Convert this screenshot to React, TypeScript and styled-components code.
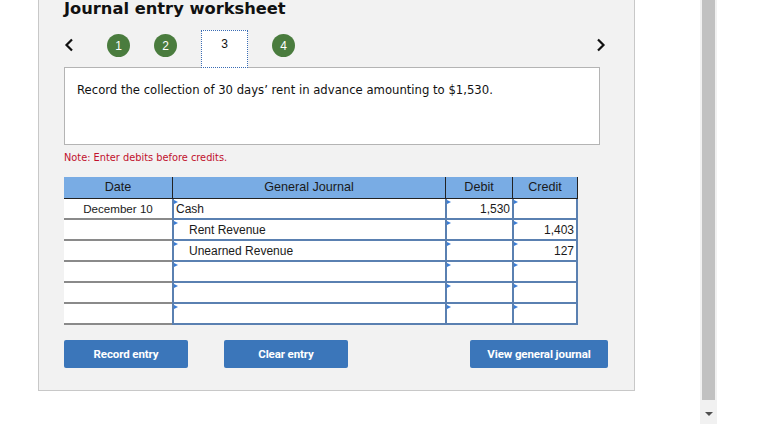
import styled, { createGlobalStyle } from 'styled-components';

const GlobalStyle = createGlobalStyle`
  html, body {
    margin: 0;
    padding: 0;
    background: #ffffff;
  }
  * {
    box-sizing: border-box;
  }
`;

const rows = [
  { date: 'December 10', account: 'Cash', indent: false, debit: '1,530', credit: '' },
  { date: '', account: 'Rent Revenue', indent: true, debit: '', credit: '1,403' },
  { date: '', account: 'Unearned Revenue', indent: true, debit: '', credit: '127' },
  { date: '', account: '', indent: false, debit: '', credit: '' },
  { date: '', account: '', indent: false, debit: '', credit: '' },
  { date: '', account: '', indent: false, debit: '', credit: '' },
];

function Chevron({ dir }: { dir: 'left' | 'right' }) {
  return (
    <svg width="10" height="14" viewBox="0 0 10 14">
      <path
        d={dir === 'left' ? 'M8 1.5 L2.5 7 L8 12.5' : 'M2 1.5 L7.5 7 L2 12.5'}
        fill="none"
        stroke="#111"
        strokeWidth="2.2"
      />
    </svg>
  );
}

export default function App() {
  return (
    <Shell>
      <GlobalStyle />
      <Main>
        <Panel>
          <Title>Journal entry worksheet</Title>
          <Nav>
            <Arrow>
              <Chevron dir="left" />
            </Arrow>
            <Step $first>1</Step>
            <Step>2</Step>
            <Tab>3</Tab>
            <Step>4</Step>
            <Arrow $right>
              <Chevron dir="right" />
            </Arrow>
          </Nav>
          <Question>
            Record the collection of 30 days’ rent in advance amounting to $1,530.
          </Question>
          <Note>Note: Enter debits before credits.</Note>

          <Journal>
            <HeadCell>Date</HeadCell>
            <HeadCell>General Journal</HeadCell>
            <HeadCell>Debit</HeadCell>
            <HeadCell $last>Credit</HeadCell>
            {rows.map((r, i) => (
              <Row key={i}>
                <DateCell>{r.date}</DateCell>
                <Entry $indent={r.indent}>{r.account}</Entry>
                <Entry $amount>{r.debit}</Entry>
                <Entry $amount $last>
                  {r.credit}
                </Entry>
              </Row>
            ))}
          </Journal>

          <Actions>
            <Button $width={124}>Record entry</Button>
            <Button $width={124} style={{ marginLeft: 36 }}>
              Clear entry
            </Button>
            <Button $width={138} $push>
              View general journal
            </Button>
          </Actions>
        </Panel>
      </Main>
      <ScrollTrack>
        <Thumb />
        <DownArrow />
      </ScrollTrack>
    </Shell>
  );
}

const Shell = styled.div`
  display: flex;
  align-items: flex-start;
  width: 770px;
  height: 428px;
  overflow: hidden;
  background: #fff;
`;

const Main = styled.main`
  flex: 0 0 700px;
  padding-left: 38px;
`;

const Panel = styled.section`
  width: 597px;
  background: #f2f2f2;
  border: 1px solid #c8c8c8;
  border-top: none;
  padding: 0 0 22px 25px;
`;

const Title = styled.h1`
  margin: 0;
  height: 30px;
  font-family: 'DejaVu Sans', Verdana, sans-serif;
  font-weight: bold;
  font-size: 16.3px;
  line-height: 18px;
  color: #111;
`;

const Nav = styled.div`
  display: flex;
  align-items: center;
  width: 542px;
  height: 37px;
`;

const Arrow = styled.div<{ $right?: boolean }>`
  display: flex;
  margin-bottom: 8px;
  margin-left: ${(p) => (p.$right ? 'auto' : '0')};
`;

const Step = styled.div<{ $first?: boolean }>`
  width: 23px;
  height: 23px;
  border-radius: 50%;
  background: #4a7c3e;
  color: #fff;
  display: flex;
  align-items: center;
  justify-content: center;
  font-family: 'Liberation Sans', Arial, sans-serif;
  font-size: 12px;
  margin-bottom: 6px;
  margin-left: ${(p) => (p.$first ? '33px' : '24px')};
`;

const Tab = styled.div`
  position: relative;
  z-index: 1;
  align-self: flex-start;
  width: 47px;
  height: 38px;
  margin-left: 24px;
  background: #fff;
  border: 1px dotted #3a6cb4;
  display: flex;
  align-items: center;
  justify-content: center;
  padding-bottom: 10px;
  font-family: 'Liberation Sans', Arial, sans-serif;
  font-size: 12px;
  color: #111;
`;

const Question = styled.div`
  width: 536px;
  height: 78px;
  background: #fff;
  border: 1px solid #b4b4b4;
  padding: 14px 0 0 12px;
  font-family: 'DejaVu Sans', Verdana, sans-serif;
  font-size: 11.65px;
  line-height: 16px;
  color: #111;
`;

const Note = styled.div`
  margin-top: 7px;
  font-family: 'DejaVu Sans', Verdana, sans-serif;
  font-size: 9.8px;
  line-height: 12px;
  color: #c1102c;
`;

const Journal = styled.div`
  margin-top: 13px;
  width: 514px;
  display: grid;
  grid-template-columns: 108px 273px 67px 66px;
  font-family: 'Liberation Sans', Arial, sans-serif;
  font-size: 12px;
  color: #1a1a1a;
`;

const HeadCell = styled.div<{ $last?: boolean }>`
  height: 22px;
  background: #79ace4;
  border-bottom: 1px solid #222;
  border-right: ${(p) => (p.$last ? '1px solid #222' : 'none')};
  border-left: 1px solid #222;
  display: flex;
  align-items: center;
  justify-content: center;
  padding-bottom: 1px;
  font-size: 12.6px;
  &:first-child {
    border-left: none;
  }
`;

const Row = styled.div`
  display: contents;
`;

const DateCell = styled.div`
  height: 21px;
  background: #fff;
  border-bottom: 2px solid #8a8a8a;
  display: flex;
  align-items: center;
  justify-content: center;
  font-size: 11.6px;
`;

const Entry = styled.div<{ $indent?: boolean; $amount?: boolean; $last?: boolean }>`
  position: relative;
  height: 21px;
  background: #fff;
  border-left: 2px solid #5a80b1;
  border-bottom: 2px solid #5a80b1;
  border-right: ${(p) => (p.$last ? '2px solid #5a80b1' : 'none')};
  display: flex;
  align-items: center;
  justify-content: ${(p) => (p.$amount ? 'flex-end' : 'flex-start')};
  padding: 0 ${(p) => (p.$amount ? '2px' : '0')} 0 ${(p) => (p.$indent ? '15px' : '2px')};

  &::before {
    content: '';
    position: absolute;
    top: 1px;
    left: 0;
    border-top: 2px solid transparent;
    border-bottom: 2px solid transparent;
    border-left: 4px solid #3a7dd6;
  }
`;

const Actions = styled.div`
  display: flex;
  width: 544px;
  margin-top: 15px;
`;

const Button = styled.button<{ $width: number; $push?: boolean }>`
  width: ${(p) => p.$width}px;
  height: 28px;
  margin-left: ${(p) => (p.$push ? 'auto' : '0')};
  border: none;
  border-radius: 2px;
  background: #3b76ba;
  color: #fff;
  font-family: 'Roboto', 'Liberation Sans', Arial, sans-serif;
  font-weight: bold;
  font-size: 11.5px;
  letter-spacing: -0.1px;
  padding: 0;
  cursor: pointer;
`;

const ScrollTrack = styled.div`
  flex: 0 0 17px;
  height: 424px;
  background: #f1f1f1;
  display: flex;
  flex-direction: column;
  align-items: center;
`;

const Thumb = styled.div`
  width: 13px;
  height: 400px;
  background: #c1c1c1;
`;

const DownArrow = styled.div`
  margin-top: 12px;
  border-left: 4px solid transparent;
  border-right: 4px solid transparent;
  border-top: 4px solid #505050;
`;
